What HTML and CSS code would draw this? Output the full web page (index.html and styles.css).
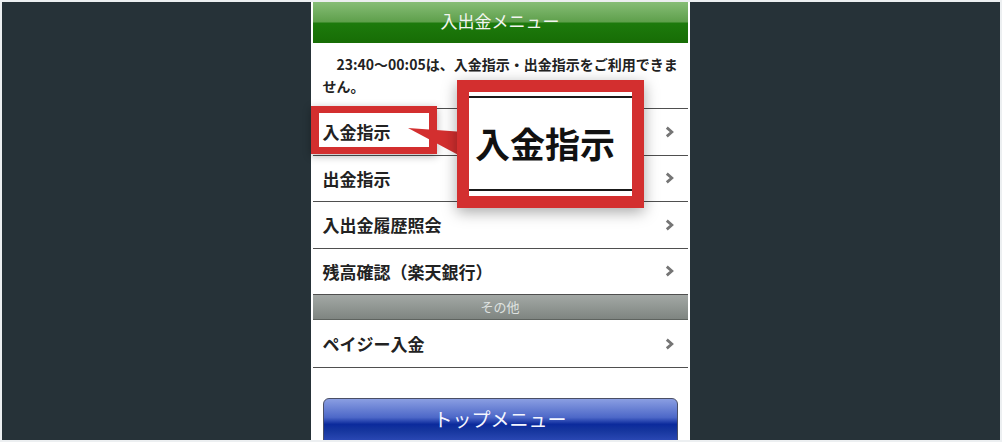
FILE: index.html
```html
<!DOCTYPE html>
<html lang="ja">
<head>
    <meta charset="UTF-8">
    <meta name="viewport" content="width=device-width, initial-scale=1.0">
    <title>入出金メニュー</title>
    <link rel="stylesheet" href="styles.css">
</head>
<body>
    <div class="stage">
        <div class="phone">
            <div class="header">入出金メニュー</div>

            <div class="notice">23:40〜00:05は、入金指示・出金指示をご利用できません。</div>

            <ul class="menu">
                <li class="row">入金指示 <svg class="chev" viewBox="0 0 9 12"><polyline points="1.8,1.6 6.8,6 1.8,10.4"/></svg></li>
                <li class="row">出金指示 <svg class="chev" viewBox="0 0 9 12"><polyline points="1.8,1.6 6.8,6 1.8,10.4"/></svg></li>
                <li class="row">入出金履歴照会 <svg class="chev" viewBox="0 0 9 12"><polyline points="1.8,1.6 6.8,6 1.8,10.4"/></svg></li>
                <li class="row">残高確認（楽天銀行） <svg class="chev" viewBox="0 0 9 12"><polyline points="1.8,1.6 6.8,6 1.8,10.4"/></svg></li>
                <li class="section">その他</li>
                <li class="row row-last">ペイジー入金 <svg class="chev" viewBox="0 0 9 12"><polyline points="1.8,1.6 6.8,6 1.8,10.4"/></svg></li>
            </ul>

            <div class="btn-wrap">
                <div class="top-btn">トップメニュー</div>
            </div>

            <!-- 注釈（吹き出し） -->
            <div class="mark-small"></div>
            <svg class="wedge" viewBox="0 0 60 32"><polygon points="0,0 56,4 56,30"/></svg>
            <div class="mark-big">
                <div class="mark-inner">入金指示</div>
            </div>
        </div>
    </div>
</body>
</html>
```

FILE: styles.css
```css
html, body {
    margin: 0;
    padding: 0;
    background: #eceff1;
}
body {
    font-family: "Noto Sans CJK JP", "Noto Sans", sans-serif;
    padding: 2px;
    height: 442px;
    box-sizing: border-box;
    overflow: hidden;
}
.stage {
    background: #263238;
    height: 438px;
    display: flex;
    justify-content: center;
    overflow: hidden;
}
.phone {
    position: relative;
    width: 379px;
    height: 100%;
    background: #fff;
    padding: 0 2px;
    box-sizing: border-box;
    margin-left: -2px;
}
.header {
    height: 41px;
    line-height: 38px;
    text-align: center;
    color: #f2f5f0;
    font-size: 17px;
    background: linear-gradient(to bottom, #86bd76 0%, #5fa04c 48%, #1d7a0c 52%, #176d05 100%);
}
.notice {
    font-size: 14px;
    font-weight: bold;
    line-height: 22px;
    color: #222;
    text-indent: 1em;
    padding: 10px 2px 11px 10px;
}
.menu {
    list-style: none;
    margin: 0;
    padding: 0;
}
.row {
    display: flex;
    align-items: center;
    justify-content: space-between;
    height: 46.5px;
    box-sizing: border-box;
    border-top: 1px solid #4f4f4f;
    padding: 0 14px 0 10px;
    font-size: 17px;
    font-weight: bold;
    color: #222;
}
.row-last {
    height: 48px;
    border-top: none;
    border-bottom: 1px solid #4f4f4f;
}
.chev {
    width: 9px;
    height: 12px;
}
.chev polyline {
    fill: none;
    stroke: #757575;
    stroke-width: 2.8;
}
.section {
    height: 26px;
    box-sizing: border-box;
    border-top: 1px solid #4f4f4f;
    border-bottom: 1px solid #5e635f;
    background: linear-gradient(to bottom, #a3a8a5, #7f8581);
    color: #dfe2e0;
    font-size: 13px;
    line-height: 24px;
    text-align: center;
}
.btn-wrap {
    padding: 30px 10px 0 10px;
}
.top-btn {
    height: 46px;
    border: 1px solid #4a4f66;
    border-radius: 6px;
    color: #f4f6ff;
    font-size: 19px;
    line-height: 40px;
    text-align: center;
    background: linear-gradient(to bottom, #8a9ee2 0%, #4d68c8 40%, #0b2a9c 55%, #17379f 70%, #3450be 100%);
}

/* 注釈 */
.mark-small {
    position: absolute;
    left: 0;
    top: 104px;
    width: 126px;
    height: 48px;
    box-sizing: border-box;
    border: 8px solid #d32f2f;
    border-top-width: 7px;
    border-bottom-width: 7px;
    box-shadow: 0 2px 8px rgba(0, 0, 0, 0.3);
}
.wedge {
    position: absolute;
    left: 97px;
    top: 126px;
    width: 60px;
    height: 32px;
}
.wedge polygon {
    fill: #d32f2f;
}
.mark-big {
    position: absolute;
    left: 146px;
    top: 78px;
    width: 187px;
    height: 128px;
    box-sizing: border-box;
    border: 12px solid #d32f2f;
    background: #fff;
    box-shadow: 0 4px 14px rgba(0, 0, 0, 0.35);
}
.mark-inner {
    margin-top: 4px;
    height: 95px;
    border-top: 2px solid #1a1a1a;
    border-bottom: 2px solid #1a1a1a;
    display: flex;
    align-items: center;
    justify-content: center;
    font-size: 35px;
    font-weight: bold;
    color: #111;
    padding: 0 10px 2px 0;
    box-sizing: border-box;
}
```
